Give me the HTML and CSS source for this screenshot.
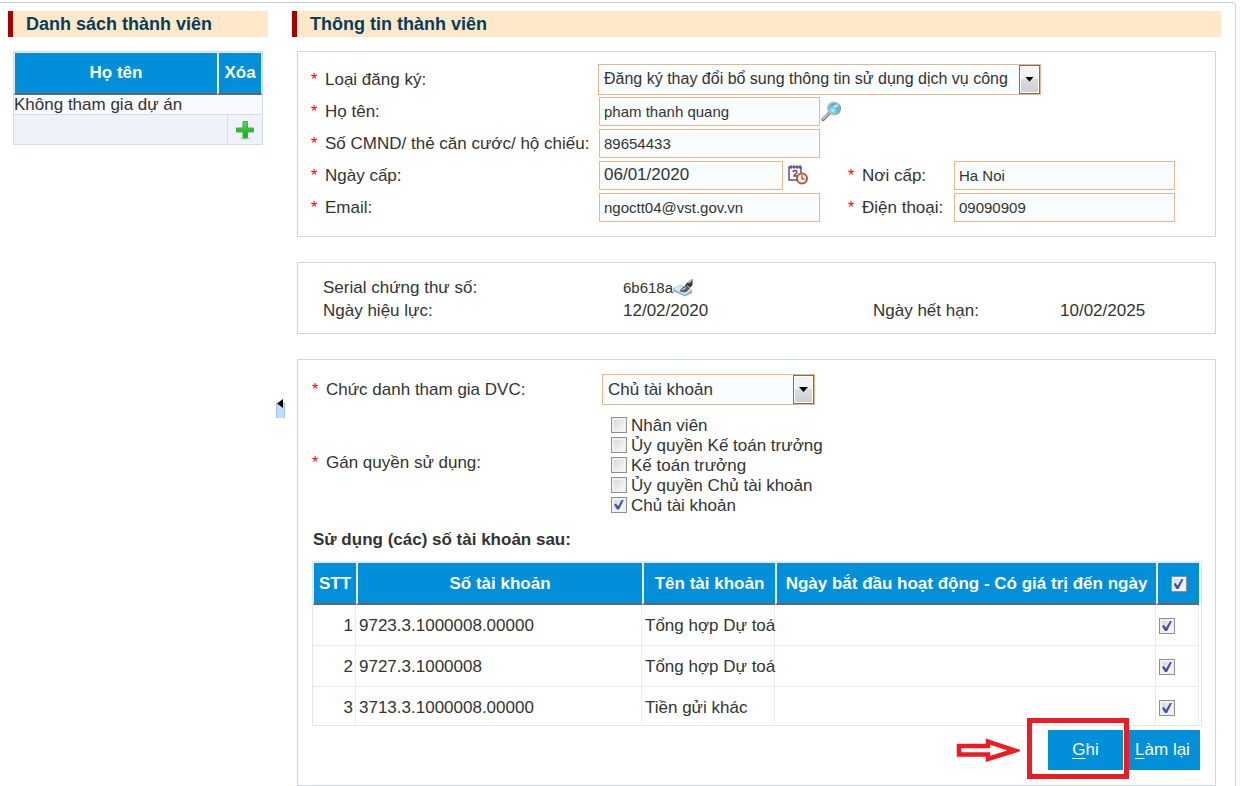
FILE: index.html
```html
<!DOCTYPE html>
<html lang="vi">
<head>
<meta charset="utf-8">
<title>Thông tin thành viên</title>
<link rel="stylesheet" href="styles.css">
</head>
<body>
<div class="shell">
  <aside class="sidebar">
    <h2 class="title">Danh sách thành viên</h2>
    <table class="members">
      <colgroup><col><col class="col-gap"><col class="col-add"></colgroup>
      <thead>
        <tr><th>Họ tên</th><th colspan="2">Xóa</th></tr>
      </thead>
      <tbody>
        <tr><td colspan="3">Không tham gia dự án</td></tr>
      </tbody>
      <tfoot>
        <tr>
          <td colspan="2"></td>
          <td>
            <button class="icon-button" type="button" aria-label="Thêm">
              <svg width="20" height="20" viewBox="0 0 20 20">
                <defs><linearGradient id="plus" x1="0" y1="0" x2="0" y2="1"><stop offset="0" stop-color="#63d763"/><stop offset="0.5" stop-color="#35bd35"/><stop offset="1" stop-color="#0db40d"/></linearGradient></defs>
                <ellipse cx="10" cy="18.500" rx="6" ry="1" fill="#c9cbd4"/>
                <path d="M8 1.500h4.500v6.500h6v4h-6v6H8v-6H1.500V8H8z" fill="url(#plus)" stroke="#3fae43"/>
              </svg>
            </button>
          </td>
        </tr>
      </tfoot>
    </table>
  </aside>

  <div class="splitter">
    <button class="splitter-handle" type="button" aria-label="Thu gọn">
      <svg width="9" height="19" viewBox="0 0 9 19"><path d="M0 4h9v15H0z" fill="#a3c4ea"/><path d="M1 4h7v15H1z" fill="#c5dcf7"/><path d="M1 4.500L7 0v9z" fill="#000"/></svg>
    </button>
  </div>

  <main class="content">
    <h2 class="title">Thông tin thành viên</h2>
    <form>
      <section class="panel form-grid">
        <label class="required" for="kind">Loại đăng ký:</label>
        <div class="wide">
          <span class="select select-long">
            <select id="kind"><option>Đăng ký thay đổi bổ sung thông tin sử dụng dịch vụ công</option></select>
            <span class="arrow"></span>
          </span>
        </div>

        <label class="required" for="name">Họ tên:</label>
        <div class="field wide">
          <input class="text" id="name" type="text" value="pham thanh quang">
          <button class="icon-button" type="button" aria-label="Tìm kiếm">
            <svg width="22" height="22" viewBox="0 0 22 22">
              <defs><radialGradient id="lens" cx="0.4" cy="0.65" r="0.6"><stop offset="0" stop-color="#c5f3fb"/><stop offset="0.5" stop-color="#5bc6e4"/><stop offset="1" stop-color="#2f9fca"/></radialGradient></defs>
              <path d="M3 19.500l6-6" stroke="#7d8488" stroke-width="3.500" stroke-linecap="round"/>
              <path d="M3 19l5-5" stroke="#c4c9cb" stroke-width="1.500" stroke-linecap="round"/>
              <circle cx="14" cy="8.500" r="6" fill="url(#lens)" stroke="#b3babd" stroke-width="2"/>
              <path d="M19.500 5a7 7 0 0 1-2 9" fill="none" stroke="#7d8a90"/>
              <ellipse cx="16" cy="6" rx="2.500" ry="1.500" fill="#e9fbff" opacity=".7"/>
            </svg>
          </button>
        </div>

        <label class="required" for="idno">Số CMND/ thẻ căn cước/ hộ chiếu:</label>
        <div class="field wide"><input class="text" id="idno" type="text" value="89654433"></div>

        <label class="required" for="date">Ngày cấp:</label>
        <div class="field">
          <input class="text text-date" id="date" type="text" value="06/01/2020">
          <button class="icon-button icon-calendar" type="button" aria-label="Chọn ngày">
            <svg width="20" height="20" viewBox="0 0 20 20">
              <path d="M1 2h12v13H1z" fill="#f6f6fc" stroke="#54548c" stroke-width="1.500"/>
              <path d="M3 0v4M6 0v4M9 0v4M12 0v4" stroke="#3f3f60"/>
              <path d="M5 7c0-2 4-2 4 0s-3 2-3 4h3" fill="none" stroke="#4d4d55" stroke-width="1.300"/>
              <circle cx="14" cy="13.500" r="5" fill="#fff5dc" stroke="#b8534e" stroke-width="2"/>
              <path d="M14 10v4h3" fill="none" stroke="#7d4a48" stroke-width="1.200"/>
            </svg>
          </button>
        </div>
        <label class="required" for="place">Nơi cấp:</label>
        <div class="field"><input class="text" id="place" type="text" value="Ha Noi"></div>

        <label class="required" for="email">Email:</label>
        <div class="field"><input class="text" id="email" type="text" value="ngoctt04@vst.gov.vn"></div>
        <label class="required" for="phone">Điện thoại:</label>
        <div class="field"><input class="text" id="phone" type="text" value="09090909"></div>
      </section>

      <section class="panel cert-grid">
        <span>Serial chứng thư số:</span>
        <span class="serial wide">6b618a<button class="icon-button" type="button" aria-label="Ký số">
            <svg width="20" height="20" viewBox="0 0 20 20">
              <path d="M0 11l7-4 12 5v3l-7 3.500L0 13z" fill="#8fa9b7"/>
              <path d="M0 11l7-4 12 5-7 5z" fill="#d3e9f5" stroke="#a9c6d5" stroke-width=".6"/>
              <path d="M7 13.500c0-2 3-5 6-6l4 3c-2 1-3 4-5 4z" fill="#5b6166"/>
              <path d="M9 12l4-2.500" stroke="#e7eef2"/>
              <path d="M12 7l4-4 3.500-2v6L16 11z" fill="#34373a"/>
              <path d="M13 5l5-4h2l-3 4z" fill="#b9bfc2"/>
              <path d="M14 7.500l3 3" stroke="#d29a3c" stroke-width="1.300"/>
            </svg>
          </button></span>
        <span>Ngày hiệu lực:</span><span>12/02/2020</span>
        <span>Ngày hết hạn:</span><span>10/02/2025</span>
      </section>

      <section class="panel roles">
        <div class="role-grid">
          <label class="required role-label" for="role">Chức danh tham gia DVC:</label>
          <span class="select select-short">
            <select id="role"><option>Chủ tài khoản</option></select>
            <span class="arrow"></span>
          </span>
          <span class="required rights-label" id="rights">Gán quyền sử dụng:</span>
          <div class="checks" role="group" aria-labelledby="rights">
            <label><input class="check" type="checkbox">Nhân viên</label>
            <label><input class="check" type="checkbox">Ủy quyền Kế toán trưởng</label>
            <label><input class="check" type="checkbox">Kế toán trưởng</label>
            <label><input class="check" type="checkbox">Ủy quyền Chủ tài khoản</label>
            <label><input class="check" type="checkbox" checked>Chủ tài khoản</label>
          </div>
        </div>

        <h3 class="subtitle">Sử dụng (các) số tài khoản sau:</h3>
        <div class="accounts-frame">
          <table class="accounts">
            <colgroup><col class="col-no"><col><col class="col-name"><col class="col-dates"><col class="col-check"></colgroup>
            <thead>
              <tr><th>STT</th><th>Số tài khoản</th><th>Tên tài khoản</th><th>Ngày bắt đầu hoạt động - Có giá trị đến ngày</th><th><input class="check" type="checkbox" checked aria-label="Chọn tất cả"></th></tr>
            </thead>
            <tbody>
              <tr><td>1</td><td>9723.3.1000008.00000</td><td>Tổng hợp Dự toá</td><td></td><td><input class="check" type="checkbox" checked aria-label="Chọn tài khoản 1"></td></tr>
              <tr><td>2</td><td>9727.3.1000008</td><td>Tổng hợp Dự toá</td><td></td><td><input class="check" type="checkbox" checked aria-label="Chọn tài khoản 2"></td></tr>
              <tr><td>3</td><td>3713.3.1000008.00000</td><td>Tiền gửi khác</td><td></td><td><input class="check" type="checkbox" checked aria-label="Chọn tài khoản 3"></td></tr>
            </tbody>
          </table>
        </div>

        <div class="actions">
          <span class="save-wrap">
            <button class="button" type="button"><u>G</u>hi</button>
            <span class="highlight"></span>
            <svg class="pointer" width="64" height="28" viewBox="0 0 64 28"><path d="M3 9h29V4.500l27 9L32 22v-4.500H3z" fill="#fff" stroke="#ed1c24" stroke-width="4.500"/></svg>
          </span>
          <button class="button" type="button"><u>L</u>àm lại</button>
        </div>
      </section>
    </form>
  </main>
</div>
</body>
</html>
```
FILE: styles.css
```css
* { box-sizing: border-box; }

body {
  margin: 0;
  background: #fff;
  color: #333;
  font: 17px/20px "Liberation Sans", Arial, sans-serif;
}

button, input, select { font: inherit; color: inherit; }

.shell {
  display: flex;
  min-height: 100vh;
  margin: 2px 14px 0 0;
  padding: 8px 14px 0 8px;
  border-top: 1px solid #c5cbdc;
  border-right: 1px solid #cdd3df;
  border-top-right-radius: 4px;
}

.sidebar { flex: 0 0 260px; }
.content { flex: 1; min-width: 0; }

.title {
  margin: 0 0 14px;
  padding-left: 13px;
  border-left: 5px solid #a90000;
  background: #ffe8c9;
  color: #033e5c;
  font-size: 18px;
  line-height: 26px;
}

.splitter {
  display: flex;
  flex: 0 0 24px;
  align-items: flex-start;
  padding: 388px 0 0 8px;
}

.splitter-handle, .icon-button {
  display: flex;
  padding: 0;
  border: 0;
  background: none;
}

/* Member list */
.members {
  width: 250px;
  margin-left: 5px;
  border: 1px solid #d3dde4;
  border-collapse: separate;
  border-spacing: 0;
  table-layout: fixed;
}

.members .col-gap { width: 10px; }
.members .col-add { width: 35px; }
.members td { padding: 0; }
.members tbody td { height: 19px; background: #f8f9fd; line-height: 19px; }

.members tfoot td {
  height: 30px;
  border-top: 1px solid #d3dde4;
  background: #eff2fb;
}

.members tfoot td + td { padding-left: 7px; border-left: 1px solid #d3dde4; }

th {
  height: 43px;
  padding: 0;
  border: 0 solid #e6e8ea;
  border-width: 1px 0 2px 2px;
  border-bottom-color: #666;
  background: #008fd8;
  color: #fff;
}

.members th:first-child { border-left-width: 1px; }
.members th:last-child { border-right-width: 1px; }

/* Panels */
.panel {
  margin: 0 5px 25px;
  border: 1px solid #cdd6de;
}

.wide { grid-column: 2 / -1; }

.form-grid {
  display: grid;
  grid-template-columns: 287px 250px 105px 1fr;
  grid-auto-rows: 32px;
  align-items: center;
  padding: 11px 0 13px 13px;
}

.required { display: flex; padding-top: 2px; }

.required::before {
  content: "*";
  flex: 0 0 14px;
  color: #f00;
  font-size: 16px;
}

.field { display: flex; align-items: center; padding-left: 1px; }

.text {
  width: 221px;
  height: 29px;
  padding: 0 4px;
  border: 1px solid #e2b88c;
  background: #f9fdff;
  font-size: 15px;
}

.text-date { width: 184px; font-size: 17px; }
.icon-calendar { margin-left: 5px; }

.select { display: inline-flex; position: relative; vertical-align: top; }
.select-long { width: 443px; font-size: 16px; }
.select-short { width: 213px; }

.select select {
  width: 100%;
  height: 31px;
  padding: 0 22px 0 5px;
  border: 1px solid #e2b88c;
  border-radius: 0;
  background: #f9fdff;
  appearance: none;
}

.arrow {
  position: absolute;
  top: 1px;
  right: 1px;
  bottom: 1px;
  width: 21px;
  border: 1px solid #707070;
  background: linear-gradient(#f3f3f3 50%, #dcdcdc 50%, #cfcfcf);
  box-shadow: inset 0 0 0 1px #fff;
  pointer-events: none;
}

.arrow::after {
  content: "";
  position: absolute;
  top: 11px;
  left: 5px;
  width: 9px;
  height: 5px;
  background: #000;
  clip-path: polygon(0 0, 100% 0, 50% 100%);
}

.cert-grid {
  display: grid;
  grid-template-columns: 300px 250px 187px 1fr;
  grid-auto-rows: 23px;
  align-items: center;
  padding: 13px 0 11px 25px;
}

.serial { display: flex; align-items: center; font-size: 15px; }

.roles { margin-bottom: 0; padding: 14px 13px 15px 14px; }

.role-grid {
  display: grid;
  grid-template-columns: 290px 1fr;
  row-gap: 10px;
  align-items: center;
}

.role-label { padding: 0; }
.rights-label { padding: 0 0 5px; }
.checks { display: grid; grid-auto-rows: 20px; padding: 1px 0 0 9px; }
.checks label { display: flex; align-items: center; gap: 4px; }
.checks .check { margin-bottom: 3px; }

.check {
  flex: none;
  display: block;
  width: 16px;
  height: 16px;
  margin: 0;
  border: 1px solid #8e8f8f;
  background: linear-gradient(135deg, #cdd2d8, #f6f6f6 80%) padding-box;
  box-shadow: inset 0 0 0 2px #f1f1f1;
  appearance: none;
}

.check:checked::after {
  content: "";
  display: block;
  width: 10px;
  height: 10px;
  margin: 2px;
  background: #40539b;
  clip-path: polygon(0 50%, 20% 40%, 40% 68%, 80% 0, 100% 0, 50% 100%, 30% 100%);
}

.subtitle { margin: 14px 1px 11px; font-size: 17px; line-height: 20px; }

.accounts-frame {
  height: 165px;
  padding-right: 2px;
  border: 1px solid #e6e6e6;
  overflow: hidden;
}

.accounts {
  width: 100%;
  border-collapse: separate;
  border-spacing: 0;
  table-layout: fixed;
}

.accounts .col-no { width: 43px; }
.accounts .col-name { width: 133px; }
.accounts .col-dates { width: 381px; }
.accounts .col-check { width: 43px; }
.accounts th { padding-top: 2px; }
.accounts th:first-child { border-left-width: 1px; }
.accounts th .check { margin: 0 auto; }

.accounts td {
  height: 41px;
  padding: 2px 2px 0 3px;
  border: 0 solid #ebebeb;
  border-width: 0 1px 1px 0;
  white-space: nowrap;
}

.accounts td:nth-child(3) { padding-right: 0; }
.accounts td:first-child { text-align: right; }

.actions {
  display: flex;
  justify-content: flex-end;
  gap: 2px;
  padding: 4px 2px 0 0;
}

.save-wrap { position: relative; }

.button {
  min-width: 75px;
  height: 40px;
  padding: 0 8px;
  border: 0;
  background: #008fd8;
  color: #fff;
}

.button u { text-underline-offset: 3px; text-decoration-thickness: 1px; }

/* Call-out drawn over the save button */
.highlight {
  position: absolute;
  inset: -12px -6px -9px -21px;
  border: 5px solid #ed1c24;
  pointer-events: none;
}

.pointer { position: absolute; top: 7px; right: 103px; }
```
